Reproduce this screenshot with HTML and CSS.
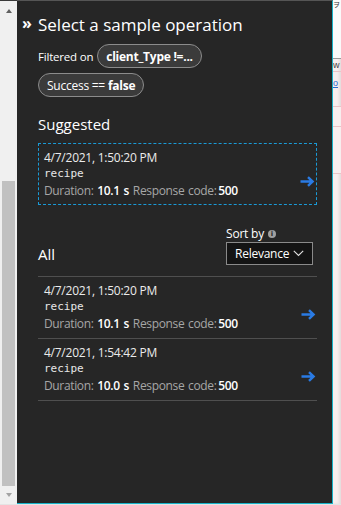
FILE: index.html
```html
<!DOCTYPE html>
<html lang="en">
<head>
<meta charset="utf-8">
<title>Select a sample operation</title>
<link rel="stylesheet" href="styles.css">
</head>
<body>
<div class="frame">
  <div class="scrollbar">
    <div class="sb-btn"><span class="tri-up"></span></div>
    <div class="sb-track"><div class="sb-thumb"></div></div>
    <div class="sb-btn sb-btn-down"><span class="tri-down"></span></div>
  </div>

  <main class="panel">
    <header class="title-row">
      <span class="collapse">»</span>
      <h1 class="title">Select a sample operation</h1>
    </header>

    <div class="filters">
      <div class="filter-line">
        <span class="filter-label">Filtered on</span>
        <span class="pill"><b>client_Type !=...</b></span>
      </div>
      <div class="filter-line">
        <span class="pill">Success == <b>false</b></span>
      </div>
    </div>

    <h2 class="section">Suggested</h2>
    <div class="op op-suggested">
      <div class="op-text">
        <div class="op-date">4/7/2021, 1:50:20 PM</div>
        <div class="op-name">recipe</div>
        <div class="op-meta"><span class="lbl">Duration:</span> <span class="val">10.1 s</span> <span class="lbl">Response code:</span>&#8201;<span class="val">500</span></div>
      </div>
      <svg class="arrow" width="15" height="11" viewBox="0 0 15 11"><path d="M0.5 5.5H12.5M8 1.2L12.6 5.5L8 9.8" fill="none" stroke="#2a7be4" stroke-width="2.4"/></svg>
    </div>

    <div class="all-head">
      <h2 class="section section-all">All</h2>
      <div class="sort">
        <div class="sort-label">Sort by <span class="info">i</span></div>
        <div class="dropdown">
          <span>Relevance</span>
          <svg width="11" height="7" viewBox="0 0 11 7"><path d="M0.8 0.8L5.5 5.5L10.2 0.8" fill="none" stroke="#e0e0e0" stroke-width="1.1"/></svg>
        </div>
      </div>
    </div>

    <div class="op op-row">
      <div class="op-text">
        <div class="op-date">4/7/2021, 1:50:20 PM</div>
        <div class="op-name">recipe</div>
        <div class="op-meta"><span class="lbl">Duration:</span> <span class="val">10.1 s</span> <span class="lbl">Response code:</span>&#8201;<span class="val">500</span></div>
      </div>
      <svg class="arrow" width="15" height="11" viewBox="0 0 15 11"><path d="M0.5 5.5H12.5M8 1.2L12.6 5.5L8 9.8" fill="none" stroke="#2a7be4" stroke-width="2.4"/></svg>
    </div>
    <div class="op op-row">
      <div class="op-text">
        <div class="op-date">4/7/2021, 1:54:42 PM</div>
        <div class="op-name">recipe</div>
        <div class="op-meta"><span class="lbl">Duration:</span> <span class="val">10.0 s</span> <span class="lbl">Response code:</span>&#8201;<span class="val">500</span></div>
      </div>
      <svg class="arrow" width="15" height="11" viewBox="0 0 15 11"><path d="M0.5 5.5H12.5M8 1.2L12.6 5.5L8 9.8" fill="none" stroke="#2a7be4" stroke-width="2.4"/></svg>
    </div>
  </main>

  <div class="strip">
    <div class="strip-top">ヲ</div>
    <div class="strip-w">w</div>
    <div class="strip-o">o</div>
    <div class="strip-rows"></div>
  </div>
</div>
</body>
</html>
```

FILE: styles.css
```css
* { box-sizing: border-box; }
html, body { margin: 0; padding: 0; }
body {
  width: 341px;
  height: 505px;
  background: #e4e4e4;
  font-family: "Open Sans", "Noto Sans", sans-serif;
  overflow: hidden;
}
.frame {
  display: flex;
  height: 504px;
}

/* scrollbar */
.scrollbar {
  width: 17px;
  display: flex;
  flex-direction: column;
  background: #f0f0f0;
  border-top: 1px solid #3a3a3a;
}
.sb-btn {
  height: 16px;
  display: flex;
  justify-content: center;
  align-items: center;
  padding-top: 3px;
}
.sb-btn-down { height: 18px; padding-top: 0; }
.tri-up {
  width: 0; height: 0;
  border-left: 3.5px solid transparent;
  border-right: 3.5px solid transparent;
  border-bottom: 4px solid #606060;
}
.tri-down {
  width: 0; height: 0;
  border-left: 3.5px solid transparent;
  border-right: 3.5px solid transparent;
  border-top: 4px solid #a3a3a3;
}
.sb-track {
  flex: 1;
  padding: 164px 2px 0 2px;
  display: flex;
  flex-direction: column;
}
.sb-thumb {
  flex: 1;
  background: #c1c1c1;
}

/* panel */
.panel {
  width: 316px;
  background: #262626;
  border-top: 1px solid #555;
  border-right: 1px solid #17b3c9;
  border-bottom: 1px solid #17b3c9;
  padding: 12px 15px 0 21px;
  color: #fff;
}
.title-row {
  display: flex;
  align-items: flex-start;
  height: 24px;
}
.collapse {
  width: 16px;
  margin-left: -16px;
  padding-top: 3px;
  font-size: 16px;
  line-height: 14px;
  font-weight: 700;
  color: #fff;
}
.title {
  margin: 0;
  font-size: 17px;
  line-height: 24px;
  font-weight: 400;
  color: #fff;
  white-space: nowrap;
}

.filters {
  margin-top: 7px;
  display: flex;
  flex-direction: column;
  gap: 5px;
}
.filter-line {
  display: flex;
  align-items: center;
  gap: 4px;
}
.filter-label {
  font-size: 11.5px;
  letter-spacing: -0.2px;
  color: #fff;
}
.pill {
  display: inline-flex;
  align-items: center;
  height: 24px;
  padding: 0 8px;
  border: 1px solid #8c8c8c;
  border-radius: 12px;
  background: #3b3b3b;
  font-size: 12px;
  letter-spacing: -0.25px;
  color: #fff;
  white-space: nowrap;
}
.pill b { font-weight: 700; margin-left: 3px; }
.filter-line:first-child .pill b { margin-left: 0; }

.section {
  margin: 16px 0 0 0;
  font-size: 15px;
  line-height: 22px;
  font-weight: 400;
  color: #fff;
}

.op {
  display: flex;
  align-items: center;
}
.op-suggested {
  margin-top: 8px;
  border: 1px dashed #1a9ad6;
  padding: 6px 1px 4px 5px;
}
.op-text { flex: 1; }
.op-date {
  font-size: 12px;
  letter-spacing: -0.25px;
  line-height: 16px;
  color: #ebebeb;
}
.op-name {
  font-family: "DejaVu Sans Mono", "Liberation Mono", monospace;
  font-size: 11px;
  line-height: 16px;
  color: #e6e6e6;
}
.op-meta {
  font-size: 12px;
  letter-spacing: -0.35px;
  word-spacing: 1px;
  line-height: 18px;
  white-space: nowrap;
}
.lbl { color: #a6a6a6; }
.val { color: #fff; font-weight: 600; }
.arrow { margin-top: 13px; flex: none; }

.all-head {
  margin-top: 22px;
  display: flex;
  justify-content: space-between;
  align-items: flex-end;
  padding: 0 4px 11px 0;
  border-bottom: 1px solid #4f4f4f;
}
.section-all { margin: 0; line-height: 22px; }
.sort { display: flex; flex-direction: column; }
.sort-label {
  font-size: 12px;
  letter-spacing: -0.2px;
  line-height: 14px;
  color: #fff;
  display: flex;
  align-items: center;
  gap: 4px;
  margin-bottom: 1px;
}
.info {
  width: 8px; height: 8px;
  border-radius: 50%;
  background: #a0a0a0;
  color: #262626;
  font-size: 7px;
  line-height: 8px;
  font-weight: 700;
  text-align: center;
  letter-spacing: 0;
  font-family: "DejaVu Sans", sans-serif;
}
.dropdown {
  width: 87px;
  height: 23px;
  background: #141414;
  border: 1px solid #8a8a8a;
  display: flex;
  align-items: center;
  justify-content: space-between;
  padding: 0 8px 0 8px;
  font-size: 12px;
  letter-spacing: -0.25px;
  color: #fff;
}

.op-row {
  padding: 6px 1px 5px 6px;
  border-bottom: 1px solid #4f4f4f;
}

/* right background strip */
.strip {
  width: 8px;
  background: #f7eeee;
  overflow: hidden;
  display: flex;
  flex-direction: column;
  box-shadow: inset -2px 0 3px rgba(0,0,0,0.08);
}
.strip-top {
  height: 58px;
  font-size: 7px;
  line-height: 9px;
  color: #333;
  font-family: "Noto Sans CJK JP", sans-serif;
  background: #fafafa;
}
.strip-w {
  height: 14px;
  border-top: 1px solid #9a9a9a;
  border-bottom: 1px solid #e8c5c8;
  font-size: 9px;
  line-height: 12px;
  color: #444;
  font-family: "Liberation Sans", sans-serif;
}
.strip-o {
  height: 35px;
  border-bottom: 1px solid #e8c5c8;
  font-size: 9px;
  line-height: 22px;
  color: #2a6ad0;
  text-decoration: underline;
  font-family: "Liberation Sans", sans-serif;
}
.strip-rows {
  height: 67px;
  border-bottom: 1px solid #e8c5c8;
  background: linear-gradient(#f7eeee 19px, #e8c5c8 19px, #e8c5c8 20px, #f7eeee 20px);
}
```
